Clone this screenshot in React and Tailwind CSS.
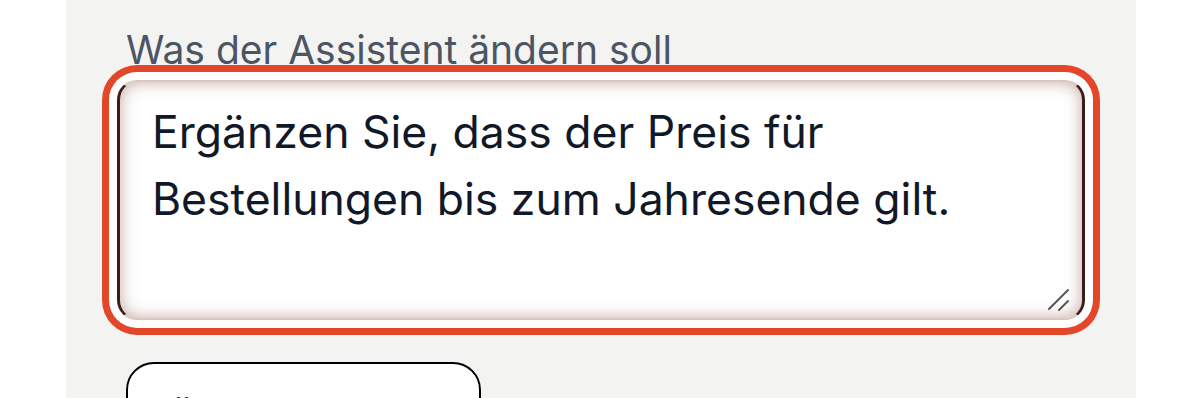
import React from 'react';

const font = { fontFamily: 'Inter, "Noto Sans", sans-serif' };

export default function App() {
  return (
    <div className="h-[398px] w-[1200px] overflow-hidden bg-white" style={font}>
      <div className="ml-[66px] w-[1070px] h-full bg-[#f3f3f1] pl-[51px] pr-[50px] pt-[26px]">
        <label className="block pl-[9px] text-[39px] leading-[48px] text-[#4b5563] whitespace-nowrap">
          Was der Assistent ändern soll
        </label>
        <div className="relative mt-[6px] w-[968px]">
          <textarea
            readOnly
            defaultValue="Ergänzen Sie, dass der Preis für Bestellungen bis zum Jahresende gilt."
            className="block h-[240px] w-[968px] resize-none rounded-[20px] border-x-[3px] border-y-[2px] border-x-[#3b1e19] border-y-[#dcc6c2] bg-white pl-[32px] pr-[40px] pt-[17px] text-[44.5px] leading-[67px] text-[#111827] outline-none ring-[7px] ring-[#e2472a] ring-offset-[8px] ring-offset-white inset-shadow-[0_0_16px_rgba(140,80,70,0.5)]"
            style={font}
          />
          {/* resize grip */}
          <svg className="pointer-events-none absolute right-[14px] bottom-[8px]" width="24" height="24" viewBox="0 0 24 24">
            <path d="M2 21 L21 2" stroke="#555" strokeWidth="2" strokeLinecap="round" />
            <path d="M12 22 L21 13" stroke="#555" strokeWidth="2" strokeLinecap="round" />
          </svg>
        </div>
        <button className="mt-[42px] ml-[9px] flex h-[100px] w-[355px] items-start rounded-[28px] border-2 border-black bg-white pl-[40px] pt-[32px] text-left text-[39px] leading-[48px] text-[#111827]">
          Überarbeiten
        </button>
      </div>
    </div>
  );
}
